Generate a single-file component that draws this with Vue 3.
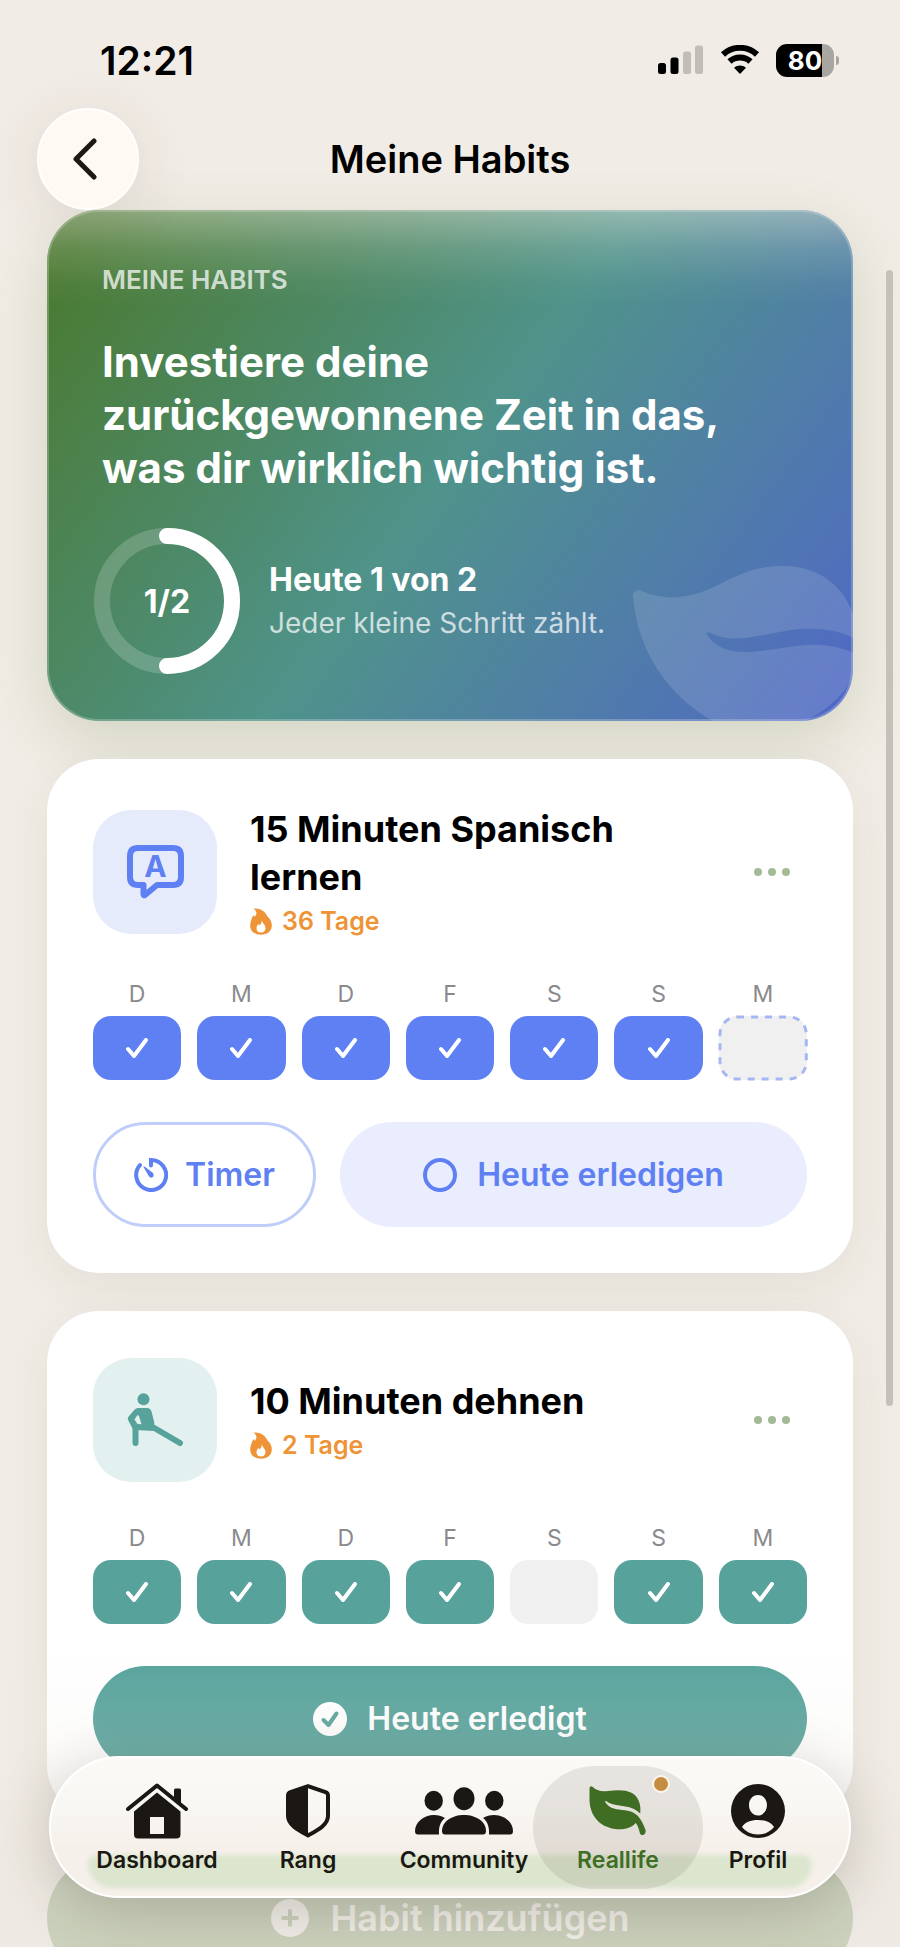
<template>
  <div class="app">
    <div class="status-bar">
      <span class="clock">12:21</span>
      <div class="status-icons">
        <svg class="signal" viewBox="0 0 46 30" aria-hidden="true">
          <rect x="0" y="18" width="8" height="11" rx="2.5" />
          <rect x="12.5" y="12.5" width="8" height="16.500" rx="2.5" />
          <rect class="weak" x="25" y="6.500" width="8" height="22.500" rx="2.5" />
          <rect class="weak" x="37" y="0.500" width="8" height="28.500" rx="2.5" />
        </svg>
        <svg class="wifi" viewBox="0 0 40 30" aria-hidden="true">
          <path class="wave" d="M3 9.500 A25 25 0 0 1 37 9.500" />
          <path class="wave" d="M9.500 16.500 A15.500 15.500 0 0 1 30.500 16.500" />
          <path d="M20 29 L14 22.800 A8.800 8.800 0 0 1 26 22.800 Z" />
        </svg>
        <div class="battery"><span>80</span></div>
      </div>
    </div>

    <header class="top-nav">
      <button type="button" class="back" aria-label="Zurück">
        <svg viewBox="0 0 26 42" aria-hidden="true"><path d="M22 3 L4 21 L22 39" /></svg>
      </button>
      <h1>Meine Habits</h1>
    </header>

    <main class="content">
      <section class="hero">
        <p class="eyebrow">MEINE HABITS</p>
        <h2>Investiere deine<br>zurückgewonnene Zeit in das,<br>was dir wirklich wichtig ist.</h2>
        <div class="progress">
          <div class="ring">
            <svg viewBox="0 0 130 130" aria-hidden="true">
              <circle class="track" cx="65" cy="65" r="65" />
              <circle class="value" cx="65" cy="65" r="65" pathLength="100" :stroke-dasharray="`${done / total * 100} 100`" />
            </svg>
            <span>{{ done }}/{{ total }}</span>
          </div>
          <div>
            <p class="today">Heute {{ done }} von {{ total }}</p>
            <p class="hint">Jeder kleine Schritt zählt.</p>
          </div>
        </div>
        <svg class="hero-leaf" viewBox="0 0 223 161" aria-hidden="true">
          <path d="M3 36 C3 30 9 29 14 32 C44 44 72 34 96 21 C120 9 135 6 153 6 C185 6 212 22 224 56 L224 78 C205 69 186 67 160 70 C128 76 100 84 81 73 C77 71 75 73 78 76 C88 91 108 94 130 91 C170 86 190 79 224 93 L224 115 C215 135 195 152 173 162 L85 162 C40 138 7 92 3 36 Z" />
        </svg>
      </section>

      <article v-for="habit in habits" :key="habit.id" class="card" :class="habit.theme">
        <div class="card-head">
          <div class="habit-icon">
            <svg v-if="habit.icon === 'language'" width="57" height="54" viewBox="0 0 57 54" aria-hidden="true">
              <path class="bubble" d="M11 3 H46 Q54 3 54 11 V32 Q54 40 46 40 H30 L18 50 Q16.500 51 16.500 49 V40 H11 Q3 40 3 32 V11 Q3 3 11 3 Z" />
              <text x="28.500" y="32" text-anchor="middle">A</text>
            </svg>
            <svg v-else class="stretch" width="56" height="54" viewBox="0 0 56 54" aria-hidden="true">
              <circle cx="16.500" cy="6.200" r="6" />
              <path fill-rule="evenodd" d="M11 15 H20 Q23.500 15 24.500 18.500 L27.300 29.500 Q27.500 31.500 26.500 33 L29 35 L27 38 L8 37 Q6 36.500 5 34.500 L1 27 Q.3 25.500 1.400 23.800 L7.500 16.800 Q9 15 11 15 Z M10.500 22 L7.500 26.500 L10.500 31 L14.500 31.300 L12 23 Z" />
              <path class="limb" d="M8.500 35 V50 M26.500 34.500 L53 50" />
            </svg>
          </div>
          <div class="habit-text">
            <h3>{{ habit.title }}</h3>
            <p class="streak">
              <svg viewBox="0 0 22 27" aria-hidden="true">
                <path fill-rule="evenodd" d="M3.500 .5 C10 -.3 15 3 17.500 8.500 C20.500 11 21.800 14 21.800 17.500 C21.800 23 17.500 26.800 11 26.800 C4.500 26.800 .2 23 .2 17.500 C.2 14 1.800 11.500 2 9.500 L4 7 L4.800 9 L6.500 6 C6.500 3.500 5.500 2 3.500 .5 Z M11.500 12.500 C11.800 15 10.500 16 10 17.500 L8.300 16 C6.800 18 6.500 19 6.500 20.500 C6.500 23 8.500 24.500 11 24.500 C14 24.500 15.500 22.500 15.500 20 C15.500 17 13 15.500 11.500 12.500 Z" />
              </svg>
              {{ habit.streak }} Tage
            </p>
          </div>
          <button type="button" class="more" aria-label="Mehr"><i></i><i></i><i></i></button>
        </div>

        <ul class="week">
          <li v-for="(day, i) in days" :key="i">
            <span>{{ day }}</span>
            <div class="day" :class="habit.week[i]">
              <svg v-if="habit.week[i] === 'done'" class="check" viewBox="0 0 22 20" aria-hidden="true"><path d="M2 11 L8 18 L20 2" /></svg>
              <svg v-else-if="habit.week[i] === 'today'" class="dashes" aria-hidden="true"><rect width="100%" height="100%" rx="17" /></svg>
            </div>
          </li>
        </ul>

        <div class="actions">
          <template v-if="!habit.completed">
            <button type="button" class="btn outline">
              <svg viewBox="0 0 34 34" aria-hidden="true">
                <path d="M17 7.500 V2 A15 15 0 1 1 6 7" />
                <path class="needle" d="M9.500 9 Q9 8 10.500 8.500 L19 15 Q20.500 17 19 19 Q17 20.500 15 18.500 Z" />
              </svg>
              Timer
            </button>
            <button type="button" class="btn soft">
              <svg viewBox="0 0 34 34" aria-hidden="true"><circle cx="17" cy="17" r="15" /></svg>
              Heute erledigen
            </button>
          </template>
          <button v-else type="button" class="btn filled">
            <svg viewBox="0 0 34 34" aria-hidden="true">
              <circle class="disc" cx="17" cy="17" r="17" />
              <path class="tick" d="M10.500 18 L15.500 23 L23.500 11.500" />
            </svg>
            Heute erledigt
          </button>
        </div>
      </article>

      <button type="button" class="add">
        <svg viewBox="0 0 38 38" aria-hidden="true">
          <circle cx="19" cy="19" r="19" />
          <path d="M19 12 V26 M12 19 H26" />
        </svg>
        Habit hinzufügen
      </button>
    </main>

    <div class="scroll-thumb"></div>
    <div class="bottom-fade"></div>

    <nav class="tab-bar">
      <a v-for="tab in tabs" :key="tab.id" href="#" :class="{ active: tab.id === 'reallife' }">
        <svg v-if="tab.id === 'dashboard'" width="64" height="56" viewBox="0 0 64 56" aria-hidden="true">
          <path class="roof" d="M3 26 L32 2.500 L61 26" />
          <path d="M49 7 Q49 5.500 50.500 5.500 H54.500 Q56 5.500 56 7 V22 L49 16.500 Z" />
          <path fill-rule="evenodd" d="M32 9.500 L55.500 28.500 V51.500 Q55.500 55.500 51.500 55.500 H13 Q9 55.500 9 51.500 V28.500 Z M25 34 V51 H39 V34 Z" />
        </svg>
        <svg v-else-if="tab.id === 'rang'" width="44" height="54" viewBox="0 0 44 54" aria-hidden="true">
          <path class="shield" d="M22 2.200 L39.500 8.200 Q42 9 42 11.500 V32 C42 41 31 46.500 22 51.500 C13 46.500 2 41 2 32 V11.500 Q2 9 4.500 8.200 Z" />
          <path d="M22 2 V52 C13 47 2 41 2 32 V11 Q2 9 4.500 8 Z" />
        </svg>
        <svg v-else-if="tab.id === 'community'" width="98" height="48" viewBox="0 0 98 48" aria-hidden="true">
          <ellipse cx="49" cy="11.700" rx="10.500" ry="11.500" />
          <ellipse cx="18.700" cy="13.700" rx="9.200" ry="10" />
          <ellipse cx="79.300" cy="13.700" rx="9.200" ry="10" />
          <path d="M27 44 C27 34 38 28 49 28 S71 34 71 44 Q71 47.500 68 47.500 H30 Q27 47.500 27 44 Z" />
          <path d="M0 44 C0 35 9 28 19 28 C23 28 27 29 30 31 C26 34 23.500 39 24 47.500 H3 Q0 47.500 0 44 Z" />
          <path d="M98 44 C98 35 89 28 79 28 C75 28 71 29 68 31 C72 34 74.500 39 74 47.500 H95 Q98 47.500 98 44 Z" />
        </svg>
        <svg v-else-if="tab.id === 'reallife'" width="58" height="50" viewBox="0 0 58 50" aria-hidden="true">
          <path d="M3.500 .8 C7 4.500 12 5.800 19 5 C28 4 36 3.500 43 7 C49 10.500 52.500 18 51.200 27.500 C44 20.500 37 21 29 19.300 C23.500 18.300 20.500 17.500 17.500 15.200 C16 14.500 15.800 15.500 16.500 16.500 C21 23.500 28 23.200 36 24.300 C47 25.500 52 31.500 56.500 44 C57.500 49 52.500 50.500 51 47.500 C50 43 49 40 46.800 37 C42 42.500 34 43.800 26 43 C9 40.500 .8 28 .5 14 V3 C.5 .5 2 -.5 3.500 .8 Z" />
        </svg>
        <svg v-else width="54" height="54" viewBox="0 0 54 54" aria-hidden="true">
          <path fill-rule="evenodd" d="M27 0 A27 27 0 1 1 27 54 A27 27 0 1 1 27 0 Z M27 11 C21.500 11 18 15.500 18 21 C18 27 22 31.500 27 31.500 C32 31.500 36 27 36 21 C36 15.500 32.500 11 27 11 Z M11 43 C14.500 47.500 20 50.500 27 50.500 C34 50.500 39.500 47.500 43 43 C40.500 38.500 34.500 36 27 36 C19.500 36 13.500 38.500 11 43 Z" />
        </svg>
        <span class="tab-label">{{ tab.label }}</span>
        <span v-if="tab.badge" class="badge"></span>
      </a>
    </nav>
  </div>
</template>

<script setup>
import { computed } from 'vue'

const days = ['D', 'M', 'D', 'F', 'S', 'S', 'M']

const habits = [
  {
    id: 1,
    title: '15 Minuten Spanisch lernen',
    streak: 36,
    icon: 'language',
    theme: 'blue',
    completed: false,
    week: ['done', 'done', 'done', 'done', 'done', 'done', 'today']
  },
  {
    id: 2,
    title: '10 Minuten dehnen',
    streak: 2,
    icon: 'stretch',
    theme: 'teal',
    completed: true,
    week: ['done', 'done', 'done', 'done', 'missed', 'done', 'done']
  }
]

const total = habits.length
const done = computed(() => habits.filter((h) => h.completed).length)

const tabs = [
  { id: 'dashboard', label: 'Dashboard' },
  { id: 'rang', label: 'Rang' },
  { id: 'community', label: 'Community' },
  { id: 'reallife', label: 'Reallife', badge: true },
  { id: 'profil', label: 'Profil' }
]
</script>

<style>
body {
  background: #f1ece5;
}
</style>

<style scoped>
* {
  box-sizing: border-box;
}

.app {
  position: relative;
  height: 100vh;
  overflow: hidden;
  background: #f1ece5;
  color: #000;
  font-family: Inter, "Liberation Sans", sans-serif;
}

h1, h2, h3, p, ul {
  margin: 0;
  padding: 0;
}

button {
  border: none;
  padding: 0;
  font-family: inherit;
  cursor: pointer;
}

svg {
  display: block;
  flex: none;
}

/* status bar */
.status-bar {
  display: flex;
  align-items: center;
  justify-content: space-between;
  height: 108px;
  padding: 12px 61px 0 100px;
}

.clock {
  font-size: 39px;
  font-weight: 600;
}

.status-icons {
  display: flex;
  align-items: center;
  gap: 16px;
}

.signal {
  width: 46px;
  height: 30px;
}

.signal .weak {
  fill: #c1beb8;
}

.wifi {
  width: 40px;
  height: 30px;
}

.wave {
  fill: none;
  stroke: #000;
  stroke-width: 6;
}

.battery {
  position: relative;
  width: 58px;
  height: 33px;
  margin-right: 5px;
  border-radius: 11px;
  background: linear-gradient(90deg, #000 46px, #a9a6a1 46px);
  color: #fff;
  font-size: 26px;
  font-weight: 700;
  line-height: 33px;
  text-align: center;
}

.battery::after {
  content: "";
  position: absolute;
  top: 12px;
  right: -5px;
  width: 3px;
  height: 9px;
  border-radius: 0 4px 4px 0;
  background: #a9a6a1;
}

/* title row */
.top-nav {
  position: relative;
  z-index: 2;
  display: grid;
  grid-template-columns: 102px 1fr 102px;
  align-items: center;
  padding: 0 37px;
}

.top-nav h1 {
  font-size: 38px;
  font-weight: 600;
  line-height: 48px;
  text-align: center;
}

.back {
  display: flex;
  align-items: center;
  justify-content: center;
  height: 102px;
  border: 2px solid #fff;
  border-radius: 50%;
  background: #fefaf3;
  box-shadow: 0 8px 60px rgba(60, 50, 40, 0.1);
}

.back svg {
  width: 26px;
  height: 42px;
  margin-right: 6px;
  fill: none;
  stroke: #1d1812;
  stroke-width: 5;
  stroke-linecap: round;
  stroke-linejoin: round;
}

.content {
  display: flex;
  flex-direction: column;
  gap: 38px;
  padding: 0 47px;
}

/* hero */
.hero {
  position: relative;
  padding: 55px;
  border-radius: 52px;
  background: linear-gradient(126deg, #4a7a31 4%, #4f938a 50%, #5069c4 98%);
  box-shadow: inset 0 0 0 2px rgba(255, 255, 255, 0.22), 0 20px 60px rgba(75, 110, 45, 0.18);
  color: #fff;
  overflow: clip;
}

.hero::before {
  content: "";
  position: absolute;
  inset: 0 0 auto;
  height: 96px;
  background: linear-gradient(rgba(241, 236, 229, 0.42), rgba(241, 236, 229, 0.17) 40%, rgba(241, 236, 229, 0.04) 75%, rgba(241, 236, 229, 0));
}

.eyebrow {
  position: relative;
  color: rgba(255, 255, 255, 0.74);
  font-size: 26px;
  font-weight: 600;
  line-height: 30px;
}

.hero h2 {
  margin: 40px 0 42px;
  font-size: 42px;
  font-weight: 700;
  line-height: 53px;
}

.progress {
  display: flex;
  align-items: center;
  gap: 37px;
}

.ring {
  display: grid;
  place-items: center;
  width: 130px;
  height: 130px;
}

.ring > * {
  grid-area: 1 / 1;
}

.ring svg {
  width: 130px;
  height: 130px;
  overflow: visible;
  transform: rotate(-90deg);
}

.ring circle {
  fill: none;
  stroke: #fff;
  stroke-width: 16;
}

.ring .track {
  opacity: 0.18;
}

.ring .value {
  stroke-linecap: round;
}

.ring span {
  font-size: 32px;
  font-weight: 700;
}

.today {
  font-size: 32px;
  font-weight: 700;
  line-height: 44px;
}

.hint {
  color: rgba(255, 255, 255, 0.72);
  font-size: 28px;
  line-height: 42px;
}

.hero-leaf {
  position: absolute;
  right: 0;
  bottom: 0;
  width: 223px;
  height: 161px;
  fill: rgba(255, 255, 255, 0.13);
}

/* habit cards */
.card {
  position: relative;
  padding: 46px;
  border-radius: 52px;
  background: #fff;
  box-shadow: 0 14px 50px rgba(60, 50, 35, 0.07);
}

.blue {
  --accent: #5f80f3;
  --tint: #e6ebfc;
}

.teal {
  --accent: #57a39c;
  --tint: #e2f0ef;
}

.card-head {
  display: flex;
  align-items: center;
}

.habit-icon {
  display: flex;
  align-items: center;
  justify-content: center;
  flex: none;
  width: 124px;
  height: 124px;
  border-radius: 38px;
  background: var(--tint);
  fill: var(--accent);
}

.teal .card-head {
  min-height: 125px;
}

.bubble {
  fill: none;
  stroke: var(--accent);
  stroke-width: 6;
  stroke-linejoin: round;
}

.habit-icon text {
  font-size: 30px;
  font-weight: 700;
}

.limb {
  fill: none;
  stroke: var(--accent);
  stroke-width: 6;
  stroke-linecap: round;
}

.habit-text {
  flex: 1;
  padding: 0 34px 0 33px;
}

.habit-text h3 {
  font-size: 36px;
  font-weight: 700;
  line-height: 48px;
}

.streak {
  display: flex;
  align-items: center;
  gap: 10px;
  margin-top: 4px;
  color: #ee9436;
  font-size: 25px;
  font-weight: 600;
  line-height: 33px;
}

.streak svg {
  width: 22px;
  height: 27px;
  fill: #ee9436;
}

.more {
  display: flex;
  align-items: center;
  justify-content: center;
  gap: 6px;
  width: 70px;
  height: 70px;
  background: none;
}

.more i {
  width: 8px;
  height: 8px;
  border-radius: 50%;
  background: #a3ba97;
}

.week {
  display: grid;
  grid-template-columns: repeat(7, 1fr);
  gap: 16px;
  margin: 42px 0;
  list-style: none;
}

.week span {
  display: block;
  margin-bottom: 8px;
  color: #8a8a8d;
  font-size: 23px;
  line-height: 28px;
  text-align: center;
}

.day {
  display: flex;
  align-items: center;
  justify-content: center;
  height: 64px;
  border-radius: 18px;
  background: #f0f0f0;
}

.day.done {
  background: var(--accent);
}

.day.today {
  padding: 1px;
}

.check {
  width: 22px;
  height: 20px;
  fill: none;
  stroke: #fff;
  stroke-width: 4;
  stroke-linecap: round;
  stroke-linejoin: round;
}

.dashes {
  width: 100%;
  height: 100%;
  overflow: visible;
  fill: none;
  stroke: #a5b7f1;
  stroke-width: 3;
  stroke-dasharray: 7 7;
}

.actions {
  display: flex;
  gap: 24px;
}

.btn {
  display: flex;
  align-items: center;
  justify-content: center;
  gap: 20px;
  height: 105px;
  padding: 0 38px;
  border-radius: 53px;
  color: var(--accent);
  font-size: 32px;
  font-weight: 600;
}

.btn svg {
  width: 34px;
  height: 34px;
  fill: none;
  stroke: var(--accent);
  stroke-width: 4;
  stroke-linecap: round;
}

.btn .needle {
  fill: var(--accent);
  stroke: none;
}

.outline {
  gap: 17px;
  border: 3px solid #bfcdfa;
  background: #fff;
}

.soft {
  flex: 1;
  background: #e9edfd;
}

.filled {
  flex: 1;
  background: var(--accent);
  color: #fff;
}

.btn .disc {
  fill: #fff;
  stroke: none;
}

.btn .tick {
  stroke-linejoin: round;
}

.add {
  display: flex;
  align-items: center;
  justify-content: center;
  flex: none;
  gap: 22px;
  height: 126px;
  border-radius: 63px;
  background: #63884a;
  color: #fff;
  font-size: 36px;
  font-weight: 600;
}

.add svg {
  width: 38px;
  height: 38px;
  fill: #fff;
}

.add path {
  stroke: #63884a;
  stroke-width: 4;
  stroke-linecap: round;
}

.scroll-thumb {
  position: absolute;
  top: 270px;
  right: 7px;
  width: 7px;
  height: 1136px;
  border-radius: 4px;
  background: #c4c0ba;
}

.bottom-fade {
  position: absolute;
  inset: auto 0 0;
  height: 300px;
  background: linear-gradient(rgba(238, 233, 226, 0), rgba(238, 233, 226, 0.16) 35%, rgba(238, 233, 226, 0.76) 80%);
}

/* tab bar */
.tab-bar {
  position: absolute;
  right: 49px;
  bottom: 49px;
  left: 49px;
  display: grid;
  grid-template-columns: 152fr 150fr 162fr 146fr 134fr;
  height: 142px;
  padding: 0 24px 0 30px;
  border: 2px solid #fff;
  border-radius: 71px;
  background: linear-gradient(#fbfaf7 0%, #f9f7f3 35%, #f5f0ea 65%);
  box-shadow: 0 12px 60px rgba(40, 35, 25, 0.22);
}

/* soft green glow along the lower edge */
.tab-bar::before {
  content: "";
  position: absolute;
  right: 37px;
  bottom: 8px;
  left: 37px;
  height: 33px;
  border-radius: 12px 12px 33px 33px;
  background: #dce6cf;
  filter: blur(2px);
}

.tab-bar a {
  position: relative;
  display: flex;
  flex-direction: column;
  align-items: center;
  padding-top: 25px;
  color: #1b1712;
  text-decoration: none;
}

.tab-bar a svg {
  position: relative;
  height: 56px;
  fill: currentColor;
}

.tab-bar .active {
  color: #3f6d24;
}

.tab-bar .active::before {
  content: "";
  position: absolute;
  inset: 8px -12px 7px;
  border-radius: 62px;
  background: rgba(70, 60, 45, 0.11);
}

.roof,
.shield {
  fill: none;
  stroke: currentColor;
  stroke-width: 4;
  stroke-linecap: round;
  stroke-linejoin: round;
}

.tab-label {
  position: relative;
  margin-top: 8px;
  font-size: 23px;
  font-weight: 600;
  line-height: 26px;
}

.badge {
  position: absolute;
  top: 17px;
  left: 50%;
  width: 18px;
  height: 18px;
  margin-left: 34px;
  border: 2px solid #fbf6ec;
  border-radius: 50%;
  background: #c68d42;
}
</style>
